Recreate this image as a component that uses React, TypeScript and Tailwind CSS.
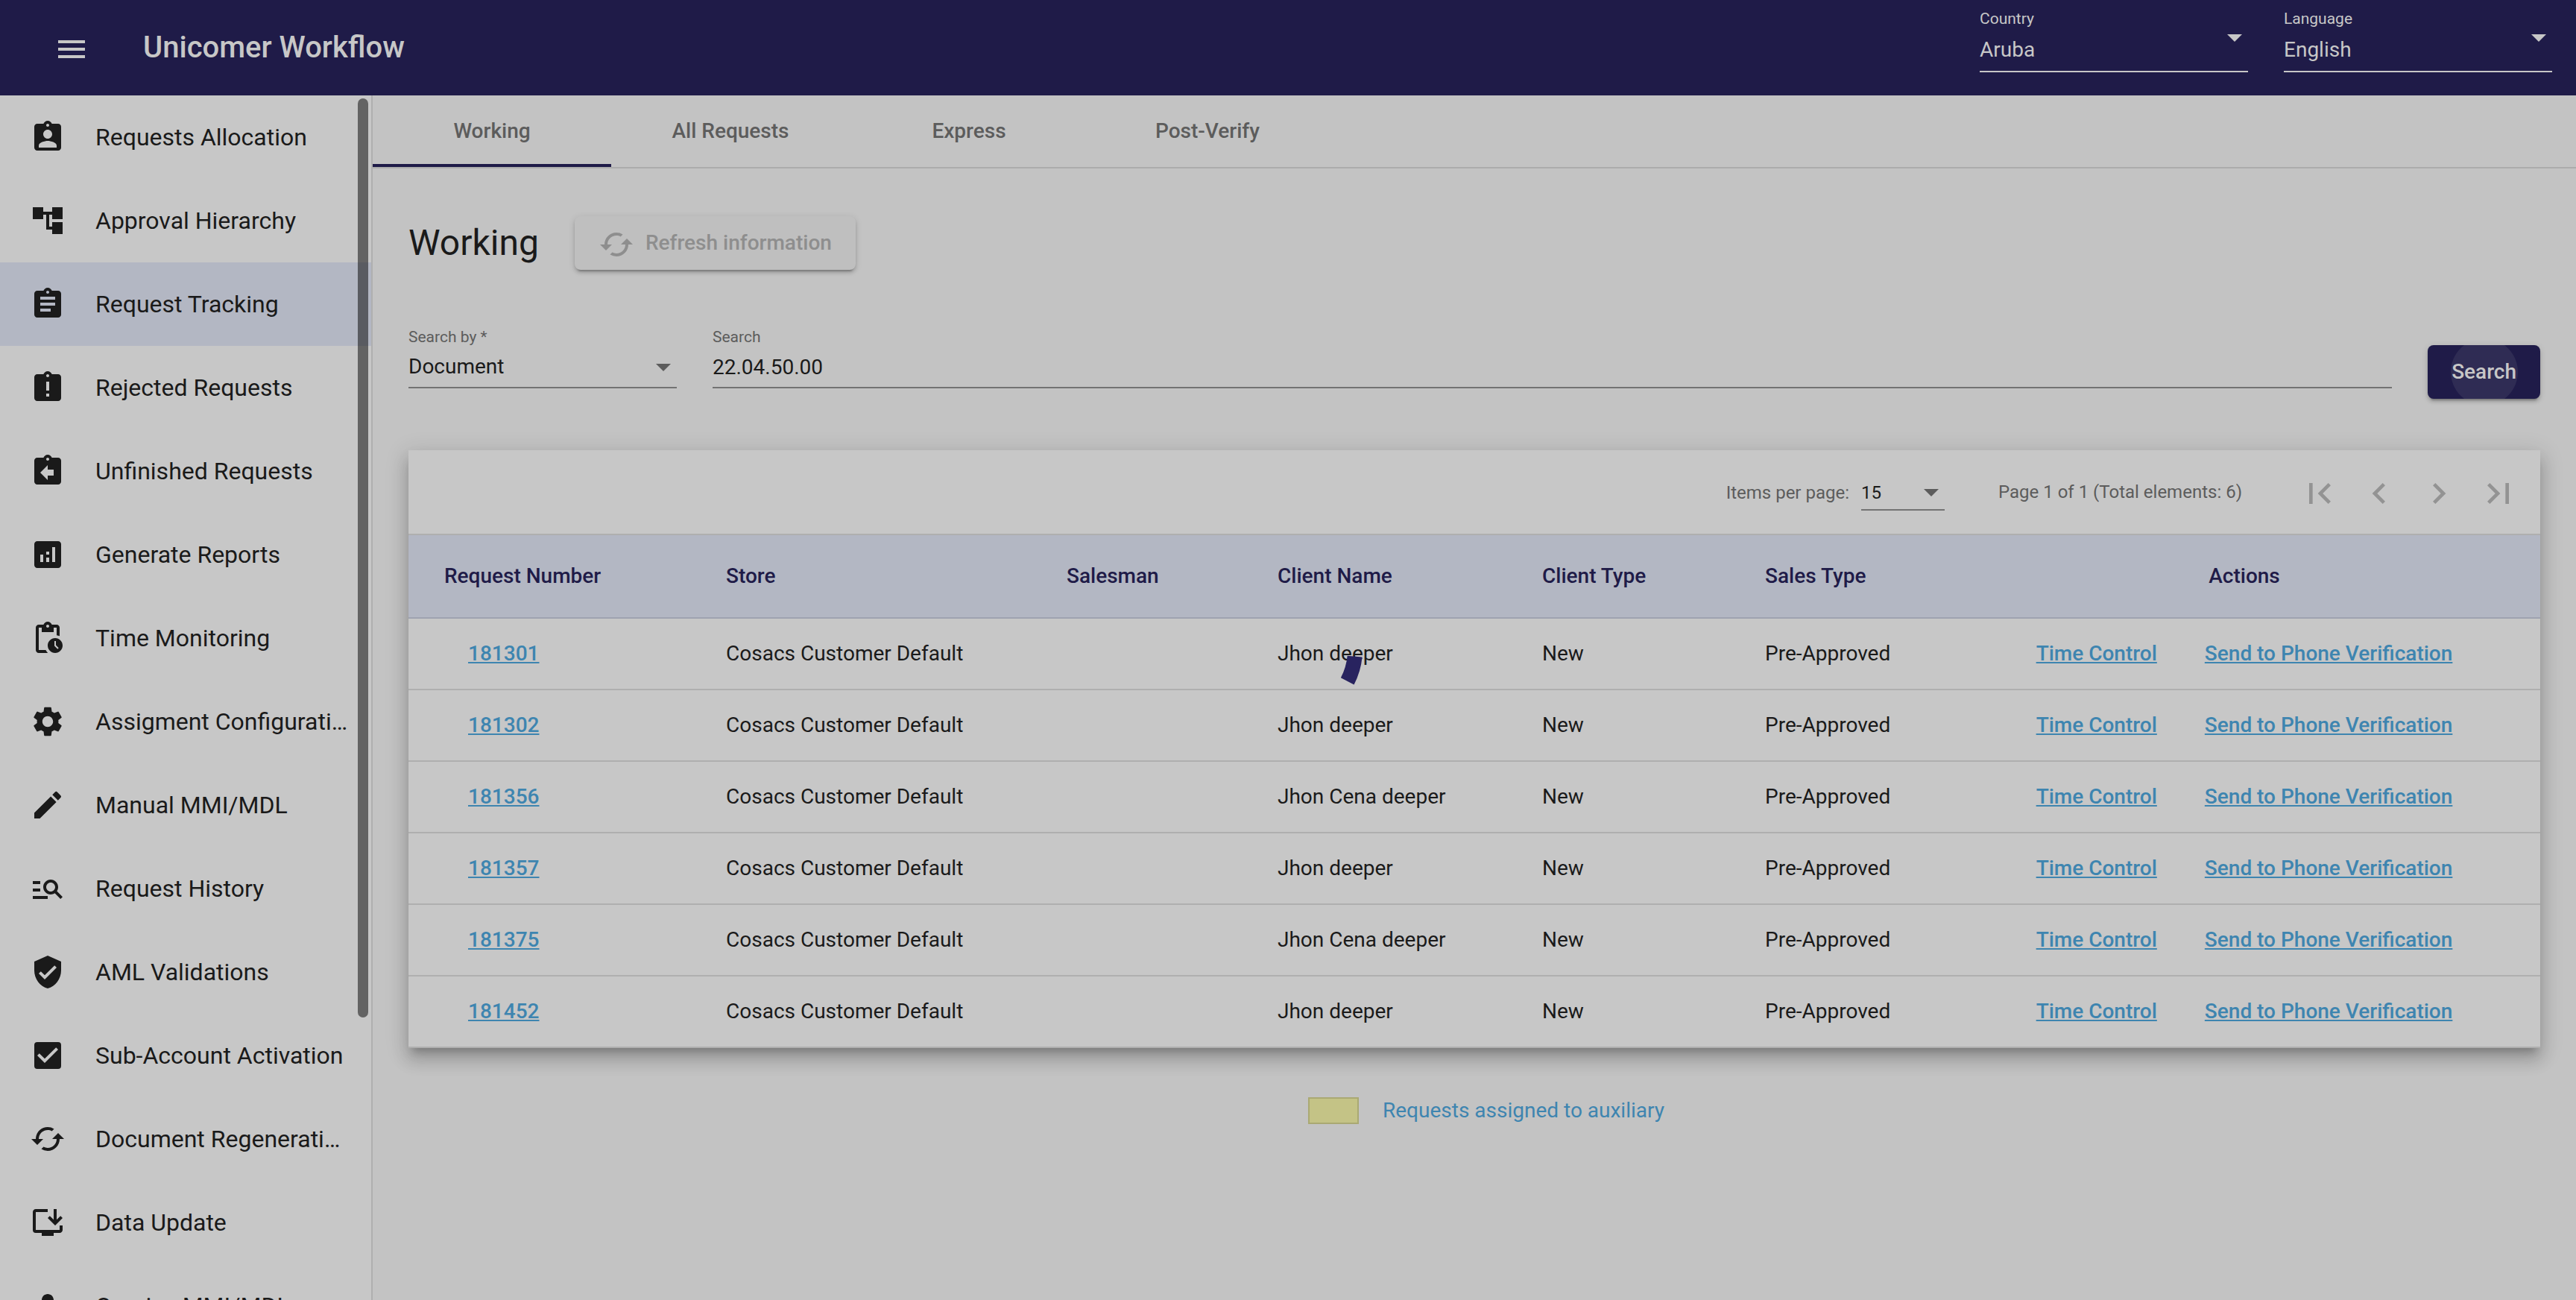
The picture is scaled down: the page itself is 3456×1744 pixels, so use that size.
import React from "react";
import type { IconType } from "react-icons";
import {
  MdAccountTree,
  MdAnalytics,
  MdAssignment,
  MdAssignmentInd,
  MdAssignmentLate,
  MdAssignmentReturn,
  MdCached,
  MdCheckBox,
  MdChevronLeft,
  MdChevronRight,
  MdEdit,
  MdFirstPage,
  MdInstallDesktop,
  MdLastPage,
  MdManageSearch,
  MdMenu,
  MdPendingActions,
  MdPerson,
  MdSettings,
  MdVerifiedUser,
} from "react-icons/md";

const navItems: { label: string; icon: IconType; active?: boolean }[] = [
  { label: "Requests Allocation", icon: MdAssignmentInd },
  { label: "Approval Hierarchy", icon: MdAccountTree },
  { label: "Request Tracking", icon: MdAssignment, active: true },
  { label: "Rejected Requests", icon: MdAssignmentLate },
  { label: "Unfinished Requests", icon: MdAssignmentReturn },
  { label: "Generate Reports", icon: MdAnalytics },
  { label: "Time Monitoring", icon: MdPendingActions },
  { label: "Assigment Configuration", icon: MdSettings },
  { label: "Manual MMI/MDL", icon: MdEdit },
  { label: "Request History", icon: MdManageSearch },
  { label: "AML Validations", icon: MdVerifiedUser },
  { label: "Sub-Account Activation", icon: MdCheckBox },
  { label: "Document Regeneration", icon: MdCached },
  { label: "Data Update", icon: MdInstallDesktop },
  { label: "Queries MMI/MDL", icon: MdPerson },
];

const tabs = ["Working", "All Requests", "Express", "Post-Verify"];

const rows = [
  { id: "181301", client: "Jhon deeper" },
  { id: "181302", client: "Jhon deeper" },
  { id: "181356", client: "Jhon Cena deeper" },
  { id: "181357", client: "Jhon deeper" },
  { id: "181375", client: "Jhon Cena deeper" },
  { id: "181452", client: "Jhon deeper" },
];

const buttonShadow =
  "shadow-[0_6px_2px_-4px_rgba(0,0,0,0.2),0_4px_4px_0_rgba(0,0,0,0.14),0_2px_10px_0_rgba(0,0,0,0.12)]";

function Caret({ className }: { className: string }) {
  return (
    <svg viewBox="0 0 20 10" className={`pointer-events-none h-[10px] w-5 shrink-0 ${className}`} aria-hidden="true">
      <path d="M0 0h20L10 10z" fill="currentColor" />
    </svg>
  );
}

function HeaderSelect({ id, label, value }: { id: string; label: string; value: string }) {
  return (
    <div className="relative flex h-[97px] w-[360px] flex-col border-b-2 border-[#c7c7c7] pt-[11px]">
      <label htmlFor={id} className="text-[21px] leading-7">
        {label}
      </label>
      <select id={id} className="mt-3 h-8 w-full appearance-none bg-transparent text-[28px] leading-8 outline-none">
        <option>{value}</option>
      </select>
      <Caret className="absolute top-[46px] right-2" />
    </div>
  );
}

function Sidebar() {
  return (
    <nav className="relative w-[500px] shrink-0 overflow-hidden border-r-2 border-[#afafaf] bg-[#c7c7c7]">
      <ul>
        {navItems.map(({ label, icon: Icon, active }) => (
          <li key={label}>
            <a
              href="#"
              aria-current={active ? "page" : undefined}
              className={`flex h-28 items-center gap-10 pr-[30px] pl-10 text-[32px] ${active ? "bg-[#b3b7c3]" : ""}`}
            >
              <Icon className="size-12 shrink-0" />
              <span className="truncate">{label}</span>
            </a>
          </li>
        ))}
      </ul>
      <div className="absolute top-1 right-1 h-[1233px] w-[14px] rounded-full bg-black/50" />
    </nav>
  );
}

function Paginator() {
  const controls: { name: string; icon: IconType }[] = [
    { name: "First page", icon: MdFirstPage },
    { name: "Previous page", icon: MdChevronLeft },
    { name: "Next page", icon: MdChevronRight },
    { name: "Last page", icon: MdLastPage },
  ];
  return (
    <div className="flex h-28 items-center justify-end pr-4 text-[24px] text-[#5c5c5c]">
      <label htmlFor="page-size" className="mt-0.5">
        Items per page:
      </label>
      <div className="relative mt-2 ml-4 flex w-28 border-b-2 border-[#737373]">
        <select
          id="page-size"
          className="h-10 w-full appearance-none bg-transparent pb-1 leading-9 text-[#1a1a1a] outline-none"
        >
          <option>15</option>
        </select>
        <Caret className="absolute top-[13px] right-2" />
      </div>
      <span className="mr-16 ml-[72px]">Page 1 of 1 (Total elements: 6)</span>
      {controls.map(({ name, icon: Icon }) => (
        <button key={name} type="button" disabled aria-label={name} className="mt-1 grid size-20 place-items-center text-[#939393]">
          <Icon className="size-14" />
        </button>
      ))}
    </div>
  );
}

function RequestsTable() {
  return (
    <table className="w-full table-fixed text-left text-[28px] leading-8">
      <colgroup>
        <col className="w-[426px]" />
        <col className="w-[457px]" />
        <col className="w-[283px]" />
        <col className="w-[355px]" />
        <col className="w-[299px]" />
        <col className="w-[294px]" />
        <col className="w-[746px]" />
      </colgroup>
      <thead>
        <tr className="h-[111px] border-b-2 border-[#9fa3b0] bg-[#b3b7c3] text-[#1f1b48]">
          <th className="pl-12 font-medium">Request Number</th>
          <th className="font-medium">Store</th>
          <th className="font-medium">Salesman</th>
          <th className="font-medium">Client Name</th>
          <th className="font-medium">Client Type</th>
          <th className="font-medium">Sales Type</th>
          <th className="pr-12 text-center font-medium">Actions</th>
        </tr>
      </thead>
      <tbody>
        {rows.map((row) => (
          <tr key={row.id} className="h-24 border-b-2 border-[#afafaf]">
            <td className="pl-20">
              <a href="#" className="font-medium text-[#3e85b0] underline">
                {row.id}
              </a>
            </td>
            <td>Cosacs Customer Default</td>
            <td />
            <td>{row.client}</td>
            <td>New</td>
            <td>Pre-Approved</td>
            <td className="pr-12">
              <div className="flex justify-center gap-16 font-medium text-[#3e85b0]">
                <a href="#" className="underline">
                  Time Control
                </a>
                <a href="#" className="underline">
                  Send to Phone Verification
                </a>
              </div>
            </td>
          </tr>
        ))}
      </tbody>
    </table>
  );
}

function Spinner() {
  return (
    <div className="pointer-events-none fixed inset-0 grid place-items-center" role="progressbar" aria-label="Loading">
      <svg viewBox="0 0 200 200" className="size-[200px]">
        <path d="M189.6 108.6A90 90 0 0 1 179.7 141.8" fill="none" stroke="#28235f" strokeWidth="20" />
      </svg>
    </div>
  );
}

export default function App() {
  return (
    <div className="flex h-screen flex-col overflow-hidden bg-[#c3c3c3] font-[Roboto,sans-serif] text-[#1a1a1a]">
      <header className="flex h-32 shrink-0 bg-[#1f1b48] pr-8 text-[#c7c7c7]">
        <button type="button" aria-label="Toggle menu" className="mt-1 ml-12 grid w-24 place-items-center">
          <MdMenu className="size-12" />
        </button>
        <h1 className="ml-12 self-center text-[40px] font-medium">Unicomer Workflow</h1>
        <div className="ml-auto flex gap-12">
          <HeaderSelect id="country" label="Country" value="Aruba" />
          <HeaderSelect id="language" label="Language" value="English" />
        </div>
      </header>

      <div className="flex min-h-0 flex-1">
        <Sidebar />
        <main className="min-w-0 flex-1">
          <div role="tablist" className="flex h-[98px] border-b-2 border-[#acacac]">
            {tabs.map((tab, i) => (
              <button
                key={tab}
                type="button"
                role="tab"
                aria-selected={i === 0}
                className={`h-24 w-80 border-y-4 border-t-transparent text-[28px] font-medium text-[#5c5c5c] ${
                  i === 0 ? "border-b-[#1f1b48]" : "border-b-transparent"
                }`}
              >
                {tab}
              </button>
            ))}
          </div>

          <div className="px-12 pt-16">
            <div className="flex items-center gap-12">
              <h2 className="text-[48px] leading-[72px]">Working</h2>
              <button
                type="button"
                disabled
                className={`flex h-[72px] items-center gap-[15px] rounded-lg bg-[#bfbfbf] px-8 text-[28px] font-medium text-[#8e8e8e] ${buttonShadow}`}
              >
                <MdCached className="mt-1 size-12" />
                Refresh information
              </button>
            </div>

            <form className="mt-[78px] flex items-start gap-12" onSubmit={(e) => e.preventDefault()}>
              <div className="relative flex w-[360px] flex-col border-b-2 border-[#737373]">
                <label htmlFor="search-by" className="text-[21px] leading-6 text-[#5c5c5c]">
                  Search by *
                </label>
                <select
                  id="search-by"
                  className="mt-3 h-[43px] w-full appearance-none bg-transparent pb-[11px] text-[28px] leading-8 outline-none"
                >
                  <option>Document</option>
                </select>
                <Caret className="absolute top-12 right-2 text-[#5c5c5c]" />
              </div>
              <div className="flex flex-1 flex-col border-b-2 border-[#737373]">
                <label htmlFor="search" className="text-[21px] leading-6 text-[#5c5c5c]">
                  Search
                </label>
                <input
                  id="search"
                  defaultValue="22.04.50.00"
                  className="mt-3 h-[43px] w-full bg-transparent pb-[11px] text-[28px] leading-8 outline-none"
                />
              </div>
              <button
                type="submit"
                className={`relative mt-[23px] h-[72px] overflow-hidden rounded-lg bg-[#1f1b48] px-8 text-[28px] font-medium text-[#c7c7c7] ${buttonShadow}`}
              >
                <span className="absolute top-1/2 left-1/2 size-[90px] -translate-1/2 rounded-full bg-[#2f2c54]" />
                <span className="relative">Search</span>
              </button>
            </form>

            <section className="mt-[69px] bg-[#c7c7c7] shadow-[0_10px_10px_-6px_rgba(0,0,0,0.2),0_16px_20px_2px_rgba(0,0,0,0.14),0_6px_28px_4px_rgba(0,0,0,0.12)]">
              <Paginator />
              <div className="border-t-2 border-[#afafaf]" />
              <RequestsTable />
            </section>

            <div className="mt-[66px] flex items-center justify-center gap-8 pl-8 text-[28px] leading-9 text-[#3e85b0]">
              <span className="h-9 w-[68px] border-2 border-[#aaa973] bg-[#c4c386]" />
              Requests assigned to auxiliary
            </div>
          </div>
        </main>
      </div>

      <Spinner />
    </div>
  );
}
